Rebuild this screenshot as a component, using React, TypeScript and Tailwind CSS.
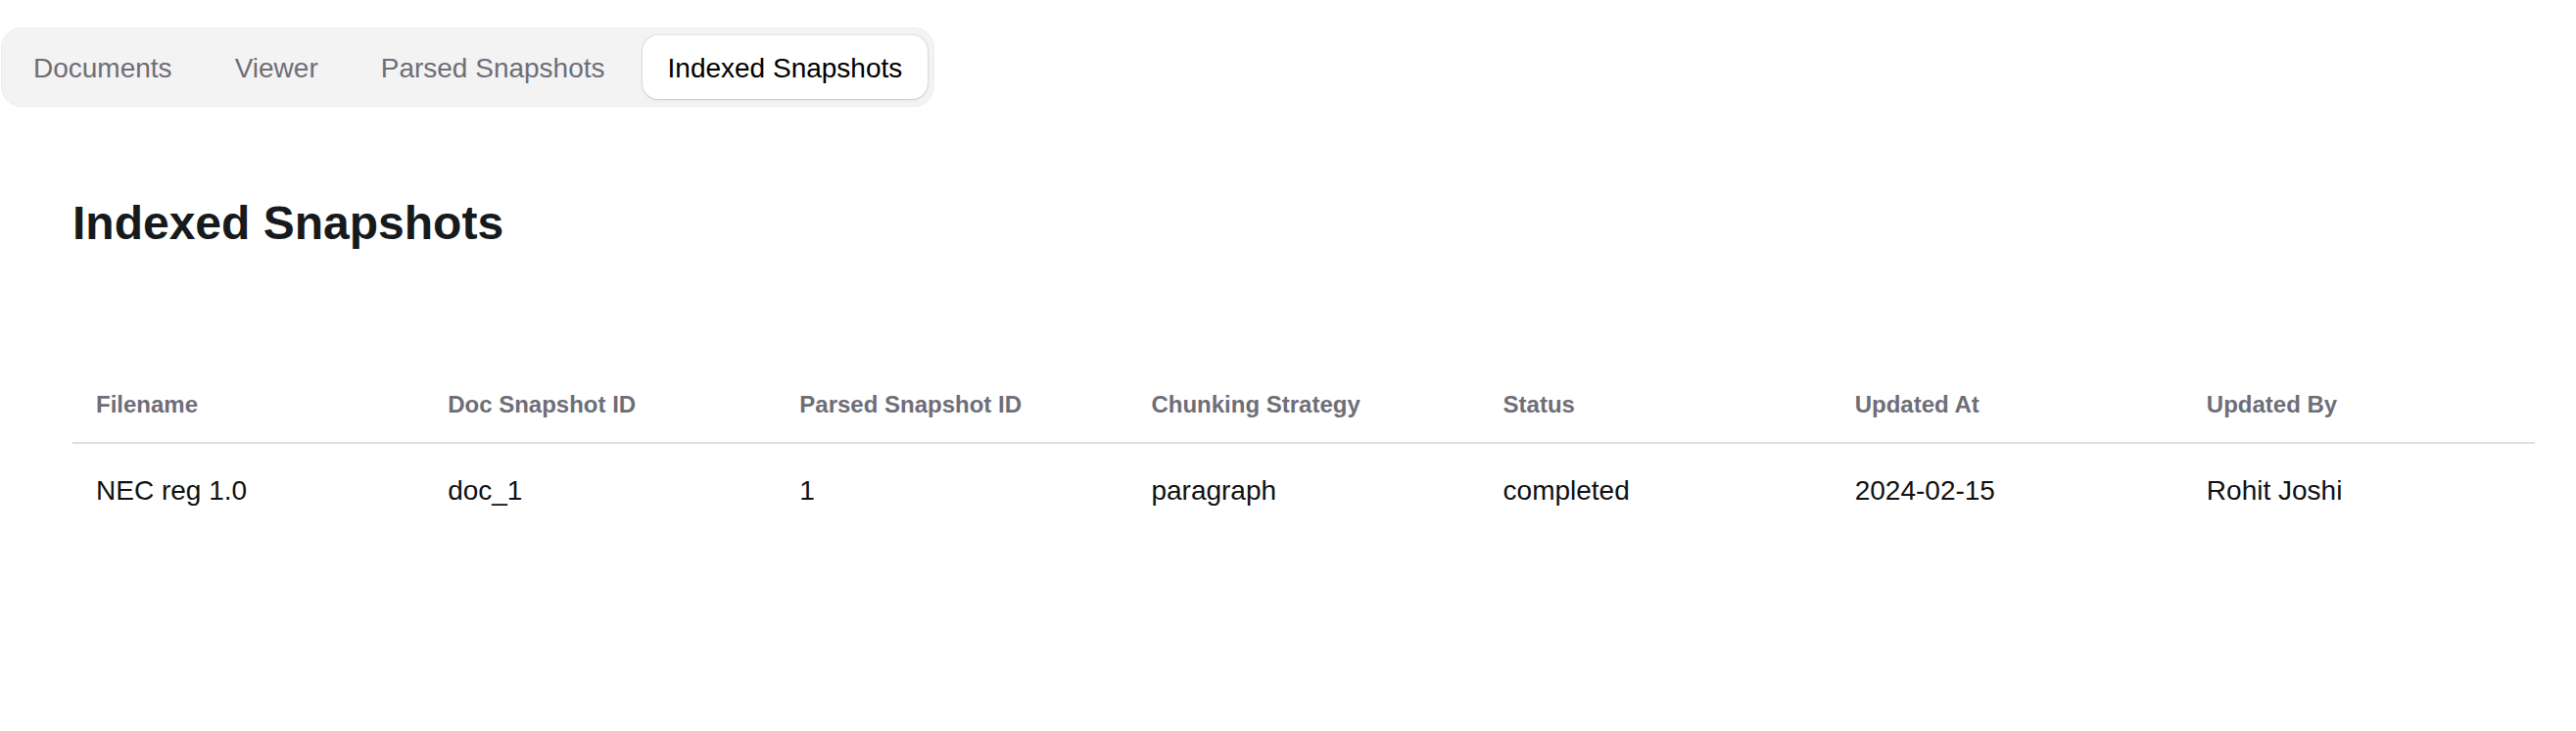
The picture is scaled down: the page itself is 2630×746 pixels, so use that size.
// App.tsx
const tabs = ["Documents", "Viewer", "Parsed Snapshots", "Indexed Snapshots"];
const active = "Indexed Snapshots";

const columns = [
  "Filename",
  "Doc Snapshot ID",
  "Parsed Snapshot ID",
  "Chunking Strategy",
  "Status",
  "Updated At",
  "Updated By",
];

const rows = [
  ["NEC reg 1.0", "doc_1", "1", "paragraph", "completed", "2024-02-15", "Rohit Joshi"],
];

export default function App() {
  return (
    <div className="min-h-screen bg-white font-['Liberation_Sans',Arial,sans-serif] text-[#111]">
      {/* Tab bar */}
      <div className="pt-[29px] pl-[2px]">
        <div className="inline-flex items-center gap-[12px] rounded-[20px] bg-[#f3f3f3] px-[6px] py-[7px] shadow-[0_0_0_1px_#ededed]">
          {tabs.map((t) => (
            <button
              key={t}
              className={[
                "h-[65px] px-[26px] rounded-[16px] text-[28px] leading-[32px] whitespace-nowrap pt-[2px]",
                t === active
                  ? "bg-white text-black shadow-[0_1px_3px_rgba(0,0,0,0.12),0_0_0_1px_#e4e4e4]"
                  : "text-[#6e6e76]",
              ].join(" ")}
            >
              {t}
            </button>
          ))}
        </div>
      </div>

      <div className="pl-[74px] pr-[42px]">
        <h1 className="mt-[96px] text-[48px] leading-[48px] font-bold text-[#161a1d]">
          Indexed Snapshots
        </h1>

        <table className="mt-[123px] w-full table-fixed border-collapse">
          <thead>
            <tr className="border-b-2 border-[#dedede]">
              {columns.map((c) => (
                <th
                  key={c}
                  className="px-[24px] py-[26px] text-left text-[24px] leading-[24px] font-bold text-[#6e6e78]"
                >
                  {c}
                </th>
              ))}
            </tr>
          </thead>
          <tbody>
            {rows.map((r, i) => (
              <tr key={i}>
                {r.map((v, j) => (
                  <td key={j} className="px-[24px] py-[32px] text-[28px] leading-[32px] text-[#111]">
                    {v}
                  </td>
                ))}
              </tr>
            ))}
          </tbody>
        </table>
      </div>
    </div>
  );
}
